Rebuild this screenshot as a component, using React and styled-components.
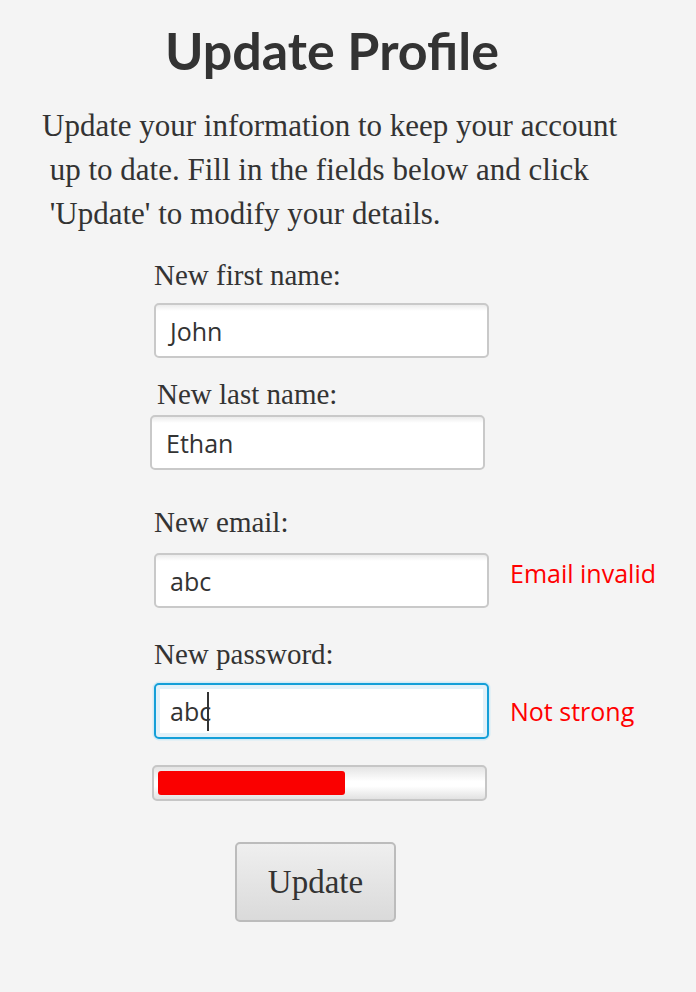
import React from "react";
import styled, { createGlobalStyle } from "styled-components";

const Global = createGlobalStyle`
  html, body { margin: 0; padding: 0; background: #f4f4f4; }
  body { width: 696px; height: 992px; overflow: hidden; }
`;

const Page = styled.main`
  display: flex;
  flex-direction: column;
  align-items: flex-start;
  padding-top: 19px;
  color: #333333;
`;

const Title = styled.h1`
  margin: 0 0 0 165px;
  font-family: "Lato", "Open Sans", sans-serif;
  font-weight: 700;
  font-size: 52px;
  line-height: 1.2;
  color: #333333;
`;

const Intro = styled.p`
  margin: 23px 0 0 42px;
  font-family: "Liberation Serif", serif;
  font-size: 31px;
  line-height: 44px;
  white-space: pre;
  color: #333333;
`;

const Form = styled.form`
  display: flex;
  flex-direction: column;
  align-items: flex-start;
  margin: 23px 0 0 150px;
`;

const FieldLabel = styled.label`
  display: block;
  margin: ${(p) => p.$mt}px 0 0 ${(p) => p.$dx}px;
  font-family: "Liberation Serif", serif;
  font-size: 29px;
  line-height: 32px;
  color: #333333;
`;

const Row = styled.div`
  display: flex;
  align-items: center;
  gap: 21px;
  margin: ${(p) => p.$mt}px 0 0 ${(p) => p.$dx}px;
`;

const TextBox = styled.div`
  box-sizing: border-box;
  width: 335px;
  height: ${(p) => (p.$focused ? 56 : 55)}px;
  display: flex;
  align-items: center;
  padding-left: 14px;
  border-radius: 5px;
  border: ${(p) => (p.$focused ? "2.5px solid #149fd8" : "2px solid #c9c9c9")};
  background: ${(p) =>
    p.$focused ? "#ffffff" : "linear-gradient(#ececec 0px, #ffffff 6px)"};
  box-shadow: ${(p) =>
    p.$focused
      ? "0 0 0 1.5px #d3ebf6, inset 0 0 0 4px #e2f1f9"
      : "none"};
  font-family: "Open Sans", sans-serif;
  font-size: 25px;
  color: #333333;
`;

const Caret = styled.span`
  display: inline-block;
  width: 2px;
  height: 39px;
  background: #333;
  transform: translateX(-4px);
`;

const ErrorText = styled.span`
  margin-bottom: ${(p) => p.$lift || 0}px;
  font-family: "Open Sans", sans-serif;
  font-size: 25px;
  color: #ff0000;
`;

const Meter = styled.div`
  box-sizing: border-box;
  width: 335px;
  height: 36px;
  margin: 26px 0 0 2px;
  padding: 4px;
  border: 2px solid #c6c6c6;
  border-radius: 5px;
  background: linear-gradient(#e4e4e4 0%, #ffffff 45%, #ffffff 60%, #e2e2e2 100%);
`;

const MeterFill = styled.div`
  height: 100%;
  background: #fa0000;
  border-radius: 3px;
`;

const UpdateButton = styled.button`
  box-sizing: border-box;
  width: 161px;
  height: 80px;
  margin: 41px 0 0 85px;
  border: 2px solid #bcbcbc;
  border-radius: 5px;
  background: linear-gradient(#efefef, #dadada);
  font-family: "Liberation Serif", serif;
  font-size: 33px;
  color: #333333;
  cursor: pointer;
  padding: 0;
`;

const fields = [
  { label: "New first name:", value: "John", labelMt: 0, labelDx: 4, rowMt: 12, rowDx: 4 },
  { label: "New last name:", value: "Ethan", labelMt: 20, labelDx: 7, rowMt: 5, rowDx: 0 },
  { label: "New email:", value: "abc", labelMt: 36, labelDx: 4, rowMt: 15, rowDx: 4, error: "Email invalid", lift: 16 },
  { label: "New password:", value: "abc", labelMt: 30, labelDx: 4, rowMt: 13, rowDx: 4, error: "Not strong", focused: true },
];

export default function App() {
  const strength = 0.58;
  return (
    <>
      <Global />
      <Page>
        <Title>Update Profile</Title>
        <Intro>
          {"Update your information to keep your account\n up to date. Fill in the fields below and click\n 'Update' to modify your details."}
        </Intro>
        <Form onSubmit={(e) => e.preventDefault()}>
          {fields.map((f) => (
            <React.Fragment key={f.label}>
              <FieldLabel $mt={f.labelMt} $dx={f.labelDx}>{f.label}</FieldLabel>
              <Row $mt={f.rowMt} $dx={f.rowDx}>
                <TextBox $focused={f.focused}>
                  {f.value}
                  {f.focused && <Caret />}
                </TextBox>
                {f.error && <ErrorText $lift={f.lift}>{f.error}</ErrorText>}
              </Row>
            </React.Fragment>
          ))}
          <Meter>
            <MeterFill style={{ width: `${strength * 100}%` }} />
          </Meter>
          <UpdateButton type="submit">Update</UpdateButton>
        </Form>
      </Page>
    </>
  );
}
